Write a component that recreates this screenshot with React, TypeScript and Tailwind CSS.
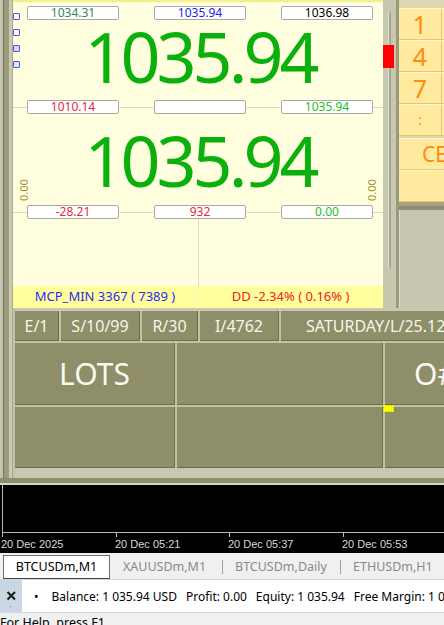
import React from 'react'

type Cell = { text: string; color: string }

function ValueBox({ text, color }: Cell) {
  return (
    <div
      className={`w-[92px] h-[14px] shrink-0 bg-white border border-[#a8a8a8] rounded-[2px] flex items-center justify-center text-[12px] leading-none ${color}`}
    >
      {text}
    </div>
  )
}

function BoxRow({ cells, line }: { cells: Cell[]; line?: boolean }) {
  const seg = line ? 'h-px bg-[#dcdcc6]' : 'h-px'
  return (
    <div className="flex items-center h-[14px] shrink-0">
      <div className={`w-[14px] ${seg}`} />
      <ValueBox {...cells[0]} />
      <div className={`w-[35px] ${seg}`} />
      <ValueBox {...cells[1]} />
      <div className={`w-[35px] ${seg}`} />
      <ValueBox {...cells[2]} />
      <div className={`flex-1 ${seg}`} />
    </div>
  )
}

function BigPrice({ value }: { value: string }) {
  return (
    <div className="h-[70px] shrink-0 pl-[4px] text-center text-[70px] leading-[70px] tracking-[-4px] text-[#0cb00c]">
      {value}
    </div>
  )
}

const keys = [
  { label: '1', cls: 'text-[25px]' },
  { label: '4', cls: 'text-[25px]' },
  { label: '7', cls: 'text-[25px]' },
  { label: ':', cls: 'text-[14px]' },
]

export default function App() {
  return (
    <div className="w-[444px] h-[625px] overflow-hidden bg-[#f0f0f0] flex flex-col font-['Noto_Sans',sans-serif]">
      {/* terminal panel */}
      <div className="h-[478px] flex shrink-0 bg-[#c6c6ae]">
        {/* window frame */}
        <div className="w-[13px] flex shrink-0">
          <div className="w-[3px] bg-[#c4c4ae]" />
          <div className="w-px bg-[#74745c]" />
          <div className="w-[5px] bg-[#9c9c7c]" />
          <div className="w-[3px] bg-[#cacab2]" />
          <div className="w-px bg-[#a8a890]" />
        </div>

        <div className="flex-1 flex flex-col relative">
          {/* quote panel + side controls */}
          <div className="h-[308px] flex shrink-0">
            <div className="relative w-[370px] flex flex-col bg-[#ffffe0] border-t-2 border-[#f0f08a]">
              <div className="h-[4px] shrink-0" />
              <BoxRow
                cells={[
                  { text: '1034.31', color: 'text-[#2e8b57]' },
                  { text: '1035.94', color: 'text-[#2020ee]' },
                  { text: '1036.98', color: 'text-black' },
                ]}
              />
              <div className="h-px shrink-0" />
              <BigPrice value="1035.94" />
              <div className="h-[9px] shrink-0" />
              <BoxRow
                line
                cells={[
                  { text: '1010.14', color: 'text-[#e8283c]' },
                  { text: '', color: 'text-black' },
                  { text: '1035.94', color: 'text-[#22c022]' },
                ]}
              />
              <div className="h-[11px] shrink-0" />
              <BigPrice value="1035.94" />
              <div className="h-[10px] shrink-0" />
              <BoxRow
                line
                cells={[
                  { text: '-28.21', color: 'text-[#e8283c]' },
                  { text: '932', color: 'text-[#e8283c]' },
                  { text: '0.00', color: 'text-[#22c022]' },
                ]}
              />
              <div className="flex-1 flex justify-center">
                <div className="w-px bg-[#dcdcc6]" />
              </div>
              <div className="h-[22px] shrink-0 flex bg-[#ffff9e] text-[13px]">
                <div className="w-[185px] flex items-center justify-center text-[#2b2bf0] border-r border-[#f6f6d6]">
                  MCP_MIN 3367 ( 7389 )
                </div>
                <div className="flex-1 flex items-center justify-center text-[#f02020]">
                  DD -2.34% ( 0.16% )
                </div>
              </div>

              {/* status markers */}
              <div className="absolute left-0 top-[11px] flex flex-col gap-[9px]">
                <div className="w-[7px] h-[7px] rounded-[1px] border-[1.5px] border-[#5050f0] bg-[#fffff0]" />
                <div className="w-[7px] h-[7px] rounded-[1px] border-[1.5px] border-[#5050f0] bg-[#fffff0]" />
                <div className="w-[7px] h-[7px] rounded-[1px] border-[1.5px] border-[#5050f0] bg-[#e8d0ff]" />
                <div className="w-[7px] h-[7px] rounded-[1px] border-[1.5px] border-[#5050f0] bg-[#d0f4f0]" />
              </div>
              <div className="absolute left-[-3px] top-[182px] w-[28px] h-[12px] -rotate-90 text-[11px] leading-[12px] text-center text-[#a89430]">
                0.00
              </div>
              <div className="absolute left-[345px] top-[182px] w-[28px] h-[12px] -rotate-90 text-[11px] leading-[12px] text-center text-[#a89430]">
                0.00
              </div>
            </div>

            {/* slider strip */}
            <div className="relative w-[13px] shrink-0 flex justify-center pt-[12px] pb-[40px] bg-[#c8c8b0]">
              <div className="w-[3px] bg-[#a8a890] border-l border-[#e2e2d0]" />
              <div className="absolute left-0 top-[45px] w-[11px] h-[23px] bg-[#ff0000]" />
            </div>

            {/* keypad */}
            <div className="flex-1 flex flex-col border-l-[3px] border-[#9a9a7c] bg-[#c6c6ae]">
              <div className="h-[8px] shrink-0 bg-[#dcd8b4]" />
              {keys.map((k) => (
                <div key={k.label} className="h-[32px] shrink-0 flex bg-[#ffeaa0] border-t border-[#fff4c4] border-b border-b-[#e4c878]">
                  <div className={`w-[43px] border-r border-[#e4c878] flex items-center justify-center text-[#ff8c10] leading-none ${k.cls}`}>
                    {k.label}
                  </div>
                  <div className="flex-1" />
                </div>
              ))}
              <div className="h-[2px] shrink-0 bg-[#dcd8b4]" />
              <div className="h-[32px] shrink-0 flex items-center bg-[#ffeaa0] border-t border-[#fff4c4] border-b border-b-[#e4c878] pl-[23px] text-[21px] leading-none text-[#ff8c10] overflow-hidden whitespace-nowrap">
                CE
              </div>
              <div className="h-[32px] shrink-0 bg-[#ffeaa0] border-t border-[#fff4c4] border-b border-b-[#e4c878]" />
              <div className="h-[4px] shrink-0 bg-[#a8a080]" />
              <div className="h-[4px] shrink-0 bg-[#8c8c70]" />
              <div className="flex-1 border-l border-[#dedecc]" />
            </div>
          </div>

          {/* trade block */}
          <div className="flex-1 flex flex-col pl-[2px] bg-[#c2c2a4]">
            <div className="h-[3px] shrink-0 bg-[#c8c8b0]" />
            <div className="h-[30px] shrink-0 flex gap-[2px] text-[16px] text-[#f6f6ea] whitespace-nowrap">
              <div className="w-[44px] flex items-center justify-center bg-[#8e8e68] border-r border-b border-[#6c6c52]">E/1</div>
              <div className="w-[79px] flex items-center justify-center bg-[#8e8e68] border-r border-b border-[#6c6c52]">S/10/99</div>
              <div className="w-[56px] flex items-center justify-center bg-[#8e8e68] border-r border-b border-[#6c6c52]">R/30</div>
              <div className="w-[79px] flex items-center justify-center bg-[#8e8e68] border-r border-b border-[#6c6c52]">I/4762</div>
              <div className="flex-1 flex items-center pl-[25px] bg-[#8e8e68] border-b border-[#6c6c52] overflow-hidden">
                SATURDAY/L/25.12
              </div>
            </div>
            <div className="h-[2px] shrink-0" />
            <div className="grid grid-cols-[160px_206px_1fr] grid-rows-[62px_61px] gap-[2px] text-[#f8f8f0]">
              <div className="flex items-center justify-center text-[30px] bg-[#8e8e68] border-r border-b border-[#6c6c52]">LOTS</div>
              <div className="bg-[#8e8e68] border-r border-b border-[#6c6c52]" />
              <div className="flex items-center pl-[29px] text-[30px] bg-[#8e8e68] border-b border-[#6c6c52] overflow-hidden whitespace-nowrap">O#</div>
              <div className="bg-[#8e8e68] border-r border-b border-[#6c6c52]" />
              <div className="bg-[#8e8e68] border-r border-b border-[#6c6c52]" />
              <div className="bg-[#8e8e68] border-b border-[#6c6c52]" />
            </div>
            <div className="flex-1 bg-[#c8c8b0]" />
            <div className="absolute left-[370px] top-[405px] w-[11px] h-[7px] bg-[#ffff00] border border-dotted border-[#c8c800]" />
          </div>
        </div>
      </div>
      <div className="h-[5px] shrink-0 bg-[#8e8e6e]" />
      <div className="h-[2px] shrink-0 bg-[#d4d4c8]" />

      {/* chart time axis */}
      <div className="h-[68px] shrink-0 bg-black flex flex-col">
        <div className="h-[48px] shrink-0 ml-[2px] border-l border-b border-[#b8b8b8]" />
        <svg width="444" height="5" className="shrink-0">
          <line x1="2.5" y1="0" x2="2.5" y2="4" stroke="#b8b8b8" />
          <line x1="116.5" y1="0" x2="116.5" y2="4" stroke="#b8b8b8" />
          <line x1="229.5" y1="0" x2="229.5" y2="4" stroke="#b8b8b8" />
          <line x1="343.5" y1="0" x2="343.5" y2="4" stroke="#b8b8b8" />
        </svg>
        <div className="flex pl-[1px] text-[11px] leading-[12px] text-[#d8d8d8] font-['Liberation_Sans',sans-serif] whitespace-nowrap">
          <div className="w-[114px]">20 Dec 2025</div>
          <div className="w-[113px]">20 Dec 05:21</div>
          <div className="w-[114px]">20 Dec 05:37</div>
          <div>20 Dec 05:53</div>
        </div>
      </div>

      {/* chart tabs */}
      <div className="h-[26px] shrink-0 flex items-end bg-[#f0f0f0] text-[12.5px] whitespace-nowrap">
        <div className="ml-[3px] w-[107px] h-[24px] flex items-center justify-center bg-white border border-[#707070] border-b-[#404040] text-black">
          BTCUSDm,M1
        </div>
        <div className="h-[24px] flex items-center">
          <div className="w-[112px] pl-[13px] text-[#8a8a8a]">XAUUSDm,M1</div>
          <div className="w-px h-[14px] bg-[#a0a0a0]" />
          <div className="w-[117px] pl-[12px] text-[#8a8a8a]">BTCUSDm,Daily</div>
          <div className="w-px h-[14px] bg-[#a0a0a0]" />
          <div className="pl-[12px] text-[#8a8a8a]">ETHUSDm,H1</div>
        </div>
      </div>

      {/* toolbox summary */}
      <div className="h-[34px] shrink-0 flex border-t border-b border-[#d6d6d6] bg-white">
        <div className="w-[22px] shrink-0 bg-[#c9d6e3]">
          <svg width="22" height="32" viewBox="0 0 22 32">
            <path d="M7.5 12 L15 19.5 M15 12 L7.5 19.5" stroke="#1a1a1a" strokeWidth="2" />
            <rect x="10" y="26" width="1" height="1" fill="#707070" />
          </svg>
        </div>
        <div className="flex-1 flex items-center pt-[2px] pl-[12px] gap-[9px] text-[12px] text-black whitespace-nowrap overflow-hidden">
          <span className="mr-[4px]">•</span>
          <span>Balance: 1 035.94 USD</span>
          <span>Profit: 0.00</span>
          <span>Equity: 1 035.94</span>
          <span>Free Margin: 1 035.94</span>
        </div>
      </div>

      {/* status bar */}
      <div className="flex-1 bg-[#f0f0f0] pt-[1px] text-[12.5px] text-black whitespace-nowrap">For Help, press F1</div>
    </div>
  )
}
